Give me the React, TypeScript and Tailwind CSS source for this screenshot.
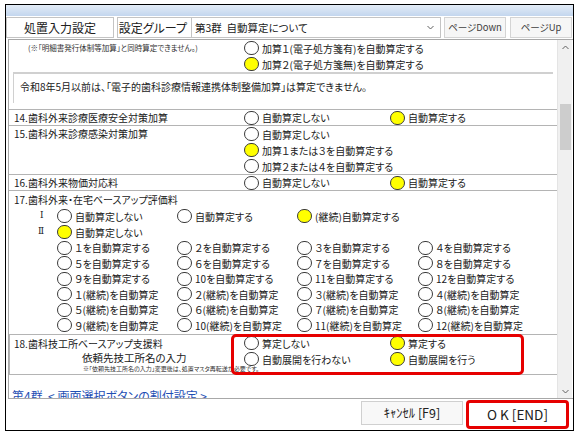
import React from "react";

type Opt = { label: string; on?: boolean };

const Radio = ({ on }: { on?: boolean }) => (
  <span
    className={`inline-block h-[14px] w-[15px] shrink-0 rounded-full border border-[#3a3a3a] ${
      on ? "bg-[#ffff00]" : "bg-white"
    }`}
  />
);

const Option = ({ label, on }: Opt) => (
  <div className="flex h-full items-center gap-[3px] whitespace-nowrap">
    <Radio on={on} />
    <span>{label}</span>
  </div>
);

const baseUp = [
  ["１を自動算定する", "２を自動算定する", "３を自動算定する", "４を自動算定する"],
  ["５を自動算定する", "６を自動算定する", "７を自動算定する", "８を自動算定する"],
  ["９を自動算定する", "10を自動算定する", "11を自動算定する", "12を自動算定する"],
  ["１(継続)を自動算定", "２(継続)を自動算定", "３(継続)を自動算定", "４(継続)を自動算定"],
  ["５(継続)を自動算定", "６(継続)を自動算定", "７(継続)を自動算定", "８(継続)を自動算定"],
  ["９(継続)を自動算定", "10(継続)を自動算定", "11(継続)を自動算定", "12(継続)を自動算定"],
];

// simple two-choice row: label on the left, options at fixed columns
const SimpleRow = ({ title, opts }: { title: string; opts: Opt[] }) => (
  <div className="flex h-[16px] items-center border-t border-[#b4b4b4]">
    <div className="w-[235px] pl-[5px]">{title}</div>
    <div className="w-[146px]">
      <Option {...opts[0]} />
    </div>
    {opts[1] && <Option {...opts[1]} />}
  </div>
);

const Chevron = ({ up }: { up?: boolean }) => (
  <svg width="7" height="5" viewBox="0 0 7 5" className="text-[#606060]">
    <polyline
      points={up ? "0.5,4 3.5,1 6.5,4" : "0.5,1 3.5,4 6.5,1"}
      fill="none"
      stroke="currentColor"
      strokeWidth="1"
    />
  </svg>
);

export default function App() {
  return (
    <div className="h-[438px] w-[581px] bg-white pl-[5px] pt-[4px] font-['Noto_Sans_CJK_JP',sans-serif] text-[#202020] [font-feature-settings:'palt']">
      <div className="flex h-[427px] w-[569px] flex-col border border-black">
        {/* title strip */}
        <div className="h-[11px] bg-gradient-to-b from-[#e3ecf7] to-[#c3d6ee]" />

        {/* toolbar */}
        <div className="flex h-[23px] items-start gap-[3px] pt-[1px] text-[12px]">
          <div className="flex h-[21px] w-[108px] items-center justify-center border border-[#c4c4c4] bg-white">
            処置入力設定
          </div>
          <div className="flex h-[21px]">
            <div className="flex w-[75px] items-center justify-end border border-[#c4c4c4] bg-white pr-[4px]">
              設定グループ
            </div>
            <div className="flex w-[249px] items-center justify-between border border-l-0 border-[#c4c4c4] bg-white pl-[3px] pr-[6px] text-[10.5px]">
              <span>第3群&nbsp;&nbsp;自動算定について</span>
              <Chevron />
            </div>
          </div>
          <div className="flex h-[21px] w-[62px] items-center justify-center border border-[#d4d4d4] bg-[#f6f6f6] text-[9.5px] text-[#404040]">
            ページDown
          </div>
          <div className="ml-[1px] flex h-[21px] w-[62px] items-center justify-center border border-[#d4d4d4] bg-[#f6f6f6] text-[9.5px] text-[#404040]">
            ページUp
          </div>
        </div>

        {/* settings panel */}
        <div className="ml-[2px] flex h-[360px] w-[565px] border border-r-0 border-[#a8a8a8] text-[10px]">
          <div className="relative w-[548px] overflow-hidden">
            {/* 13. tail */}
            <div className="flex h-[16px] items-center">
              <div className="w-[235px] pl-[19px] text-[7.5px] text-[#303030]">
                (※「明細書発行体制等加算」と同時算定できません。)
              </div>
              <Option label="加算１(電子処方箋有)を自動算定する" />
            </div>
            <div className="flex h-[16px] items-center">
              <div className="w-[235px]" />
              <Option label="加算２(電子処方箋無)を自動算定する" on />
            </div>
            <div className="ml-[4px] mr-[4px] h-[31px] border-l border-t-2 border-[#d0d0d0] pl-[6px] pt-[5px]">
              令和8年5月以前は、「電子的歯科診療情報連携体制整備加算」は算定できません。
            </div>
            <div className="h-[6px]" />

            <SimpleRow
              title="14.歯科外来診療医療安全対策加算"
              opts={[{ label: "自動算定しない" }, { label: "自動算定する", on: true }]}
            />

            {/* 15. */}
            <div className="flex border-t border-[#b4b4b4]">
              <div className="w-[235px] pl-[5px] leading-[16px]">15.歯科外来診療感染対策加算</div>
              <div className="flex flex-col">
                <div className="h-[16px]">
                  <Option label="自動算定しない" />
                </div>
                <div className="h-[16px]">
                  <Option label="加算１または３を自動算定する" on />
                </div>
                <div className="h-[16px]">
                  <Option label="加算２または４を自動算定する" />
                </div>
              </div>
            </div>

            <SimpleRow
              title="16.歯科外来物価対応料"
              opts={[{ label: "自動算定しない" }, { label: "自動算定する", on: true }]}
            />

            {/* 17. */}
            <div className="border-t border-[#b4b4b4] pb-[1px]">
              <div className="flex h-[17px] items-center pl-[5px]">17.歯科外来・在宅ベースアップ評価料</div>
              <div className="grid h-[16px] grid-cols-[48px_120px_120px_121px_1fr] items-center">
                <span className="pl-[31px] font-['DejaVu_Serif',serif] text-[9px]">Ⅰ</span>
                <Option label="自動算定しない" />
                <Option label="自動算定する" />
                <Option label="(継続)自動算定する" on />
              </div>
              <div className="grid h-[16px] grid-cols-[48px_120px_120px_121px_1fr] items-center">
                <span className="pl-[29px] font-['DejaVu_Serif',serif] text-[9px]">Ⅱ</span>
                <Option label="自動算定しない" on />
              </div>
              {baseUp.map((row, i) => (
                <div key={i} className="grid h-[15.5px] grid-cols-[48px_120px_120px_121px_1fr] items-center">
                  <span />
                  {row.map((label) => (
                    <Option key={label} label={label} />
                  ))}
                </div>
              ))}
            </div>

            {/* 18. */}
            <div className="relative flex h-[41px] border-y border-l border-[#b4b4b4]">
              <div className="w-[234px] pl-[4px]">
                <div className="flex h-[16px] items-center">18.歯科技工所ベースアップ支援料</div>
                <div className="flex h-[13px] items-center pl-[68px] text-[10.5px] leading-[13px]">依頼先技工所名の入力</div>
                <div className="flex h-[9px] items-end whitespace-nowrap pl-[69px] text-[6px] leading-[8px] text-[#303030]">
                  ※「依頼先技工所名の入力」変更後は、処置マスタ再転送が必要です。
                </div>
              </div>
              <div className="flex w-[146px] flex-col">
                <div className="h-[16px]">
                  <Option label="算定しない" />
                </div>
                <div className="h-[16px]">
                  <Option label="自動展開を行わない" />
                </div>
              </div>
              <div className="flex flex-col">
                <div className="h-[16px]">
                  <Option label="算定する" on />
                </div>
                <div className="h-[16px]">
                  <Option label="自動展開を行う" on />
                </div>
              </div>
              <div className="absolute left-[221px] top-[-1px] h-[41px] w-[293px] rounded-[5px] border-[3px] border-[#e60000]" />
            </div>

            <div className="mt-[13px] h-[16px] pl-[3px] text-[12px] leading-[16px] text-[#1f4fb4] underline">
              第4群&nbsp;&nbsp;&lt; 画面選択ボタンの割付設定 &gt;
            </div>
          </div>

          {/* scrollbar */}
          <div className="flex w-[15px] flex-col items-center border-l border-[#e4e4e4] bg-[#f0f0f0]">
            <div className="flex h-[14px] items-center">
              <Chevron up />
            </div>
            <div className="mt-[50px] h-[46px] w-[11px] bg-[#cdcdcd]" />
            <div className="flex-1" />
            <div className="flex h-[14px] items-center">
              <Chevron />
            </div>
          </div>
        </div>

        {/* dialog buttons */}
        <div className="flex flex-1 items-start justify-end gap-[3px] pr-[4px] pt-[1px]">
          <div className="mt-[1px] flex h-[24px] w-[102px] items-center justify-center border border-[#d0d0d0] bg-[#f8f8f8] text-[12.5px]">
            ｷｬﾝｾﾙ [F9]
          </div>
          <div className="flex h-[29px] w-[103px] items-center justify-center rounded-[4px] border-[3px] border-[#e60000] bg-white text-[13.5px]">
            O K [END]
          </div>
        </div>
      </div>
    </div>
  );
}
